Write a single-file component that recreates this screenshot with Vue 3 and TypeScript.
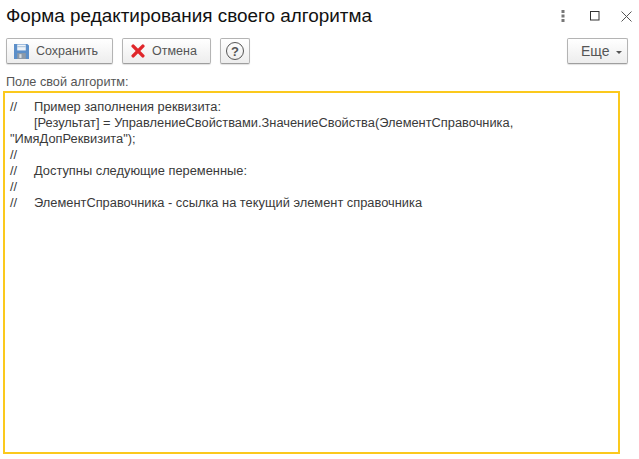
<script setup lang="ts">
const code = [
  '//\tПример заполнения реквизита:',
  '\t[Результат] = УправлениеСвойствами.ЗначениеСвойства(ЭлементСправочника, "ИмяДопРеквизита");',
  '//',
  '//\tДоступны следующие переменные:',
  '//',
  '//\tЭлементСправочника - ссылка на текущий элемент справочника',
].join('\n')
</script>

<template>
  <div class="form">
    <header class="titlebar">
      <h1 class="title">Форма редактирования своего алгоритма</h1>
      <div class="window-controls">
        <svg width="4" height="12" viewBox="0 0 4 12" class="ctl-dots">
          <rect x="0.5" y="0" width="3" height="3" fill="#777" />
          <rect x="0.5" y="4.5" width="3" height="3" fill="#777" />
          <rect x="0.5" y="9" width="3" height="3" fill="#777" />
        </svg>
        <svg width="10" height="10" viewBox="0 0 10 10" class="ctl-max">
          <rect x="0.5" y="0.5" width="8.5" height="8.5" fill="none" stroke="#333" stroke-width="1" />
        </svg>
        <svg width="11" height="11" viewBox="0 0 11 11" class="ctl-close">
          <path d="M0.5 0.5 L10.5 10.5 M10.5 0.5 L0.5 10.5" stroke="#555" stroke-width="1" fill="none" />
        </svg>
      </div>
    </header>

    <div class="toolbar">
      <button class="btn btn-save" type="button">
        <svg width="15" height="15" viewBox="0 0 14 14">
          <path d="M0 0 H12.5 L14 1.5 V14 H0 Z" fill="#5c8fc9" />
          <rect x="3" y="0.5" width="8" height="5.5" fill="#eef3f8" />
          <rect x="3" y="2" width="8" height="1" fill="#a9c0d9" />
          <rect x="3" y="8.5" width="8" height="5.5" fill="#8d9aa8" />
          <rect x="5" y="9.5" width="2" height="3.5" fill="#d7dde3" />
        </svg>
        <span>Сохранить</span>
      </button>
      <button class="btn btn-cancel" type="button">
        <svg width="14" height="14" viewBox="0 0 13 13">
          <path d="M2 2 L11 11 M11 2 L2 11" stroke="#e0262a" stroke-width="3.2" stroke-linecap="round" fill="none" />
        </svg>
        <span>Отмена</span>
      </button>
      <button class="btn btn-help" type="button" aria-label="Справка">
        <span class="help-mark">?</span>
      </button>
      <button class="btn btn-more" type="button">
        <span>Еще</span>
        <i class="caret"></i>
      </button>
    </div>

    <label class="field-label">Поле свой алгоритм:</label>
    <div class="editor">{{ code }}</div>
  </div>
</template>

<style>
html, body { margin: 0; background: #fff; }
</style>

<style scoped>
.form {
  width: 639px;
  height: 459px;
  box-sizing: border-box;
  display: flex;
  flex-direction: column;
  background: #fff;
  font-family: "Liberation Sans", Arial, sans-serif;
  overflow: hidden;
}
.titlebar {
  display: flex;
  align-items: center;
  justify-content: space-between;
  height: 32px;
  padding: 0 7px 0 6px;
}
.title {
  margin: 0;
  font-size: 18.9px;
  font-weight: 400;
  color: #111;
}
.window-controls {
  display: flex;
  align-items: center;
}
.ctl-dots { margin-right: 25px; }
.ctl-max { margin-right: 21px; }
.toolbar {
  display: flex;
  align-items: center;
  gap: 9px;
  padding: 6px 11px 0 6px;
}
.btn {
  height: 26px;
  box-sizing: border-box;
  display: flex;
  align-items: center;
  padding: 0;
  border: 1px solid #b4b4b4;
  border-bottom-color: #9e9e9e;
  border-radius: 2px;
  background: linear-gradient(#ffffff, #ededed);
  box-shadow: 0 1px 1px rgba(0, 0, 0, 0.12);
  color: #555;
  font: 12.5px "Liberation Sans", Arial, sans-serif;
}
.btn-save { width: 107px; padding-left: 7px; gap: 7px; }
.btn-cancel { width: 89px; padding-left: 8px; gap: 7px; }
.btn-help { width: 30px; justify-content: center; }
.help-mark {
  width: 16px;
  height: 16px;
  border: 1.5px solid #555;
  border-radius: 50%;
  display: flex;
  align-items: center;
  justify-content: center;
  font-weight: 700;
  font-size: 13px;
  color: #555;
}
.btn-more {
  width: 61px;
  margin-left: auto;
  padding-left: 13px;
  gap: 6px;
  font-size: 14px;
}
.caret {
  width: 0;
  height: 0;
  border-left: 3px solid transparent;
  border-right: 3px solid transparent;
  border-top: 3px solid #555;
  margin-top: 2px;
}
.field-label {
  display: block;
  margin: 10px 0 0 6px;
  font-size: 12.7px;
  line-height: 16px;
  color: #555;
}
.editor {
  width: 617px;
  height: 363px;
  box-sizing: border-box;
  margin: 1px 0 0 3px;
  padding: 6px 5px;
  border: 2px solid #fbc91d;
  font-size: 12.85px;
  line-height: 16px;
  color: #3a3a3a;
  white-space: pre-wrap;
  tab-size: 24px;
}
</style>
